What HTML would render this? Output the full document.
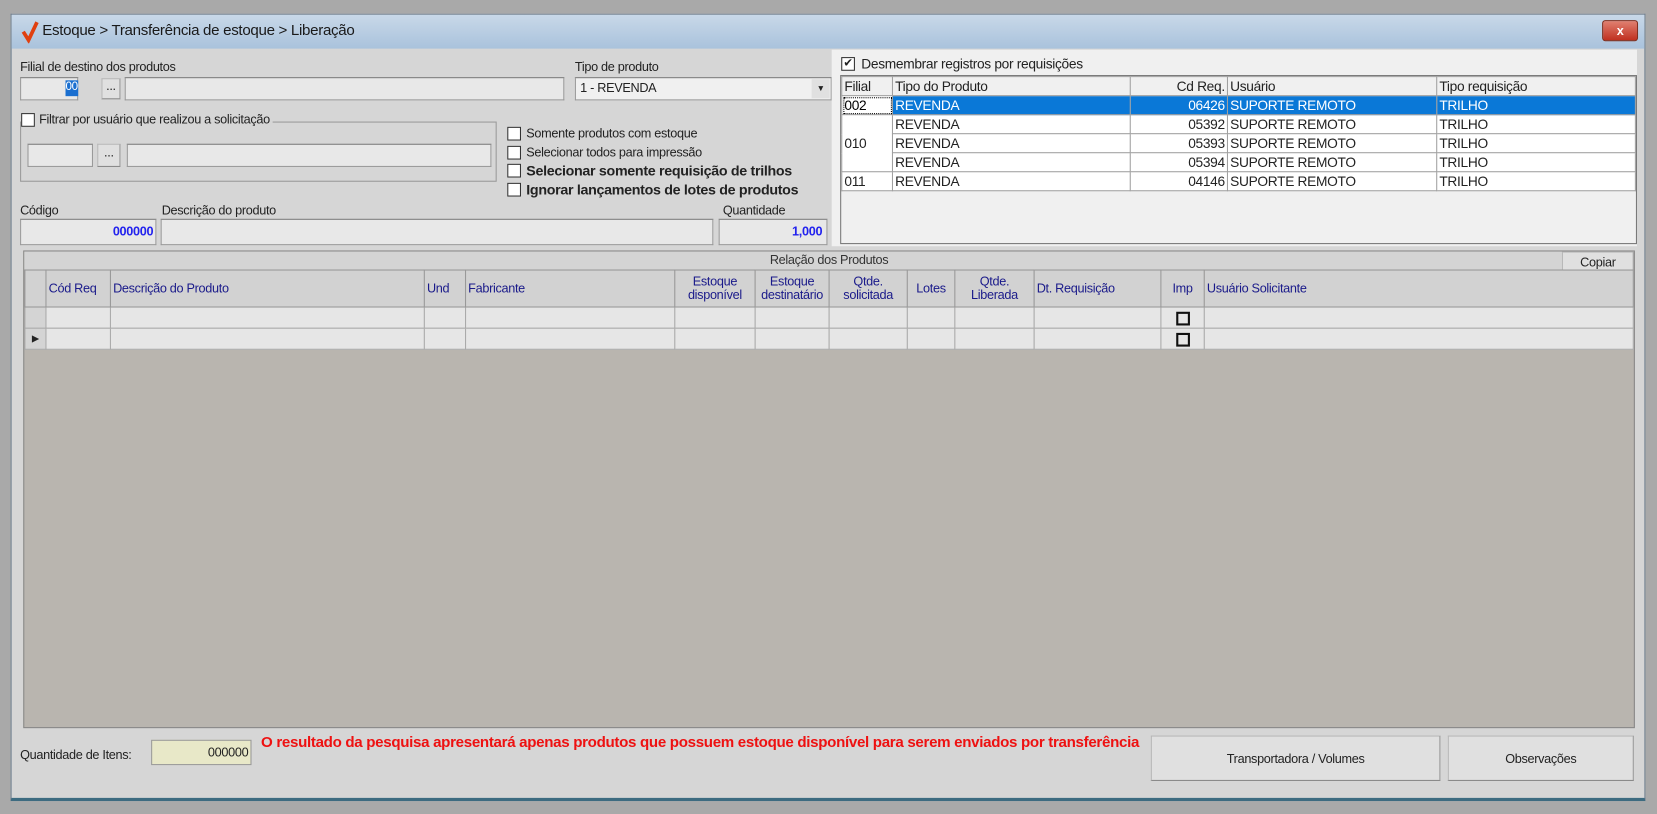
<!DOCTYPE html>
<html><head><meta charset="utf-8"><style>
*{box-sizing:border-box;margin:0;padding:0}
body{width:1657px;height:814px;background:#a9a9a9;font-family:"Liberation Sans",sans-serif;font-size:12px;color:#222;position:relative;overflow:hidden;letter-spacing:-0.3px}
#w{position:absolute;left:0;top:0;width:1568px;height:770px;transform:scale(1.0568);transform-origin:0 0}
.a{position:absolute}
.win{left:10px;top:13px;width:1547px;height:745px;background:#d6d6d6;border:1px solid #6f7f8f;border-bottom:3px solid #3d6b80}
.title{left:11px;top:14px;width:1545px;height:32px;background:linear-gradient(#c8d8e8,#a9c2dc);}
.in{background:#e8e8e8;border:1px solid #9a9a9a;border-top-color:#7a7a7a;height:22px}
.cb{width:13px;height:13px;border:1px solid #333;background:#fff}
.lbl{white-space:nowrap}
table{border-collapse:collapse}
.rt td{border:1px solid #a0a0a0;height:18px;padding:0 2px;font-size:13px;white-space:nowrap}
.sel td{background:#0a78d7;color:#fff}
.ph{background:#d2d2d2;color:#1a1a8a;font-size:12px;text-align:left;border:1px solid #999;padding:0 2px;font-weight:normal;line-height:13px}
.pr td{border:1px solid #aaa;height:20px;background:#e6e6e6}
.btn{background:#e0e0e0;border:1px solid #b8b8b8;border-right-color:#999;border-bottom-color:#888;text-align:center}
</style></head><body><div id="w">
<div class="a win"></div>
<div class="a title"></div>
<svg class="a" style="left:20px;top:19px" width="18" height="22"><path d="M2 11 L7 19 L15 2" stroke="#e04010" stroke-width="3.5" fill="none"/></svg>
<div class="a lbl" style="left:40px;top:21px;font-size:14.3px;color:#1a1a1a">Estoque &gt; Transferência de estoque &gt; Liberação</div>
<div class="a" style="left:1516px;top:19px;width:34px;height:20px;background:linear-gradient(#e08070,#c03020);border:1px solid #803020;border-radius:3px;color:#fff;text-align:center;font-weight:bold;line-height:18px">x</div>

<div class="a lbl" style="left:19px;top:56px">Filial de destino dos produtos</div>
<div class="a in" style="left:19px;top:73px;width:55px;"></div>
<div class="a" style="left:62px;top:76px;width:12px;height:15px;background:#1a6fd0;color:#fff;font-size:11px;overflow:hidden">000</div>
<div class="a btn" style="left:96px;top:74px;width:18px;height:20px;line-height:12px">...</div>
<div class="a in" style="left:118px;top:73px;width:416px"></div>
<div class="a lbl" style="left:544px;top:56px">Tipo de produto</div>
<div class="a in" style="left:544px;top:73px;width:243px;background:#f0f0f0;padding:2px 4px;font-size:12px">1 - REVENDA</div>
<div class="a" style="left:768px;top:75px;width:17px;height:18px;background:#e0e0e0;font-size:8px;text-align:center;line-height:18px">▼</div>

<div class="a" style="left:19px;top:115px;width:451px;height:57px;border:1px solid #999"></div>
<div class="a lbl" style="left:20px;top:106px;background:#d6d6d6;padding-right:3px;display:flex;gap:4px;align-items:center"><span class="cb" style="display:inline-block"></span>Filtrar por usuário que realizou a solicitação</div>
<div class="a in" style="left:26px;top:136px;width:62px"></div>
<div class="a btn" style="left:92px;top:136px;width:22px;height:22px">...</div>
<div class="a in" style="left:120px;top:136px;width:345px"></div>

<div class="a lbl" style="left:480px;top:119px;display:flex;gap:5px;align-items:center"><span class="cb"></span>Somente produtos com estoque</div>
<div class="a lbl" style="left:480px;top:137px;display:flex;gap:5px;align-items:center"><span class="cb"></span>Selecionar todos para impressão</div>
<div class="a lbl" style="left:480px;top:154px;display:flex;gap:5px;align-items:center;font-weight:bold;font-size:13.5px"><span class="cb"></span>Selecionar somente requisição de trilhos</div>
<div class="a lbl" style="left:480px;top:172px;display:flex;gap:5px;align-items:center;font-weight:bold;font-size:13.5px"><span class="cb"></span>Ignorar lançamentos de lotes de produtos</div>

<div class="a lbl" style="left:19px;top:192px">Código</div>
<div class="a in" style="left:19px;top:207px;width:129px;height:25px;text-align:right;color:#2222ee;font-weight:bold;padding:4px 2px">000000</div>
<div class="a lbl" style="left:153px;top:192px">Descrição do produto</div>
<div class="a in" style="left:152px;top:207px;width:523px;height:25px"></div>
<div class="a lbl" style="left:684px;top:192px">Quantidade</div>
<div class="a in" style="left:680px;top:207px;width:103px;height:25px;text-align:right;color:#2222ee;font-weight:bold;padding:4px 4px">1,000</div>

<div class="a" style="left:787px;top:47px;width:762px;height:186px;background:#f0f0f0"></div>
<div class="a lbl" style="left:796px;top:53px;display:flex;gap:6px;align-items:center;font-size:13px"><span class="cb" style="font-size:11px;line-height:10px;text-align:center">✔</span>Desmembrar registros por requisições</div>
<div class="a" style="left:795px;top:71px;width:754px;height:160px;background:#f0f0f0;border:1px solid #777"></div>
<table class="a rt" style="left:796px;top:72px;width:752px;background:#fff">
<tr style="background:#f0f0f0"><td style="width:48px">Filial</td><td style="width:225px">Tipo do Produto</td><td style="width:92px;text-align:right">Cd Req.</td><td style="width:198px">Usuário</td><td>Tipo requisição</td></tr>
<tr class="sel"><td style="background:#fff;color:#000;outline:1px dotted #000;outline-offset:-2px">002</td><td>REVENDA</td><td style="text-align:right">06426</td><td>SUPORTE REMOTO</td><td>TRILHO</td></tr>
<tr><td rowspan="3" style="background:#fff">010</td><td>REVENDA</td><td style="text-align:right">05392</td><td>SUPORTE REMOTO</td><td>TRILHO</td></tr>
<tr><td>REVENDA</td><td style="text-align:right">05393</td><td>SUPORTE REMOTO</td><td>TRILHO</td></tr>
<tr><td>REVENDA</td><td style="text-align:right">05394</td><td>SUPORTE REMOTO</td><td>TRILHO</td></tr>
<tr><td>011</td><td>REVENDA</td><td style="text-align:right">04146</td><td>SUPORTE REMOTO</td><td>TRILHO</td></tr>
</table>

<div class="a" style="left:22px;top:237px;width:1525px;height:452px;background:#b9b5af;border:1px solid #888"></div>
<div class="a" style="left:23px;top:238px;width:1523px;height:17px;background:#d4d4d4;text-align:center;color:#333;line-height:17px">Relação dos Produtos</div>
<div class="a btn" style="left:1478px;top:238px;width:68px;height:19px;line-height:18px">Copiar</div>
<table class="a" style="left:23px;top:255px;width:1523px">
<tr style="height:35px"><th class="ph" style="width:20px"></th><th class="ph" style="width:61px">Cód Req</th><th class="ph" style="width:297px">Descrição do Produto</th><th class="ph" style="width:39px">Und</th><th class="ph" style="width:198px">Fabricante</th><th class="ph" style="width:76px;text-align:center">Estoque disponível</th><th class="ph" style="width:70px;text-align:center">Estoque destinatário</th><th class="ph" style="width:74px;text-align:center">Qtde. solicitada</th><th class="ph" style="width:45px;text-align:center">Lotes</th><th class="ph" style="width:75px;text-align:center">Qtde. Liberada</th><th class="ph" style="width:120px">Dt. Requisição</th><th class="ph" style="width:41px;text-align:center">Imp</th><th class="ph">Usuário Solicitante</th></tr>
<tr class="pr"><td style="background:#d4d4d4"></td><td></td><td></td><td></td><td></td><td></td><td></td><td></td><td></td><td></td><td></td><td style="text-align:center"><span class="cb" style="display:inline-block;border:2px solid #111;background:#e6e6e6;vertical-align:middle"></span></td><td></td></tr>
<tr class="pr"><td style="background:#d4d4d4;font-size:9px;text-align:center">▶</td><td></td><td></td><td></td><td></td><td></td><td></td><td></td><td></td><td></td><td></td><td style="text-align:center"><span class="cb" style="display:inline-block;border:2px solid #111;background:#e6e6e6;vertical-align:middle"></span></td><td></td></tr>
</table>

<div class="a lbl" style="left:19px;top:707px">Quantidade de Itens:</div>
<div class="a" style="left:143px;top:700px;width:95px;height:24px;background:#e8e8c8;border:1px solid #999;text-align:right;padding:4px 2px">000000</div>
<div class="a lbl" style="left:247px;top:695px;color:#ee1111;font-weight:bold;font-size:14.3px;width:834px;overflow:hidden">O resultado da pesquisa apresentará apenas produtos que possuem estoque disponível para serem enviados por transferência</div>
<div class="a btn" style="left:1089px;top:696px;width:274px;height:43px;line-height:42px">Transportadora / Volumes</div>
<div class="a btn" style="left:1370px;top:696px;width:176px;height:43px;line-height:42px">Observações</div>
</div></body></html>
